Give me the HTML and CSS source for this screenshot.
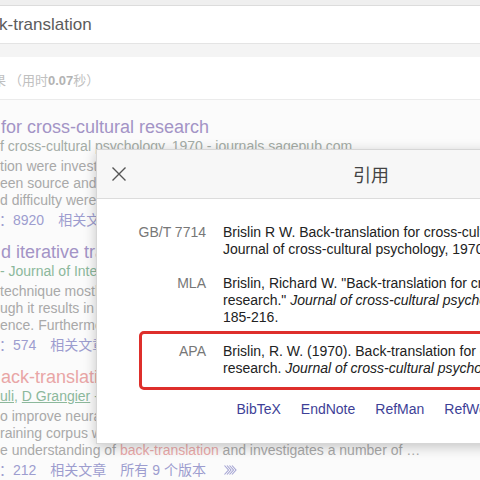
FILE: index.html
```html
<!DOCTYPE html>
<html lang="zh">
<head>
<meta charset="utf-8">
<title>引用</title>
<link rel="stylesheet" href="styles.css">
</head>
<body>
<div class="page">
  <div class="topband"></div>
  <div class="searchbar"><span class="query">k-translation</span></div>
  <div class="band"></div>
  <div class="stats"><span class="stat-text">果 （用时<b>0.07</b>秒）</span></div>
  <div class="results">
    <div class="result">
      <div class="title visited">for cross-cultural research</div>
      <div class="meta gray">f cross-cultural psychology, 1970 - journals.sagepub.com</div>
      <div class="snippet">tion were investigated in a study of translation</div>
      <div class="snippet">een source and target versions of the</div>
      <div class="snippet">d difficulty were examined in detail</div>
      <div class="links"><span class="lk">：8920</span><span class="lk">相关文章</span><span class="lk">所有 12 个版本</span></div>
    </div>
    <div class="result">
      <div class="title visited">d iterative translation for neural machine</div>
      <div class="meta">- Journal of International Research</div>
      <div class="snippet">technique mostly used for training data</div>
      <div class="snippet">ugh it results in improved quality</div>
      <div class="snippet">ence. Furthermore, we show that</div>
      <div class="links"><span class="lk">：574</span><span class="lk">相关文章</span><span class="lk">所有 8 个版本</span></div>
    </div>
    <div class="result">
      <div class="title hot">ack-translation at scale</div>
      <div class="meta"><u>uli</u>, <u>D Grangier</u> - arXiv preprint</div>
      <div class="snippet">o improve neural machine translation</div>
      <div class="snippet">raining corpus with synthetic sentences</div>
      <div class="snippet">e understanding of <span class="em">back-translation</span> and investigates a number of …</div>
      <div class="links"><span class="lk">：212</span><span class="lk">相关文章</span><span class="lk">所有 9 个版本</span><span class="lk more"><svg width="14" height="12" viewBox="0 0 14 12"><path d="M1.5 1.5 L5.5 6 L1.5 10.5 M4 1.5 L8 6 L4 10.5 M6.5 1.5 L10.5 6 L6.5 10.5 M9 1.5 L13 6 L9 10.5" fill="none" stroke="#a3a3d3" stroke-width="1.1"/></svg></span></div>
    </div>
  </div>
</div>

<div class="modal">
  <div class="modal-head">
    <span class="close"><svg width="16" height="16" viewBox="0 0 16 16"><path d="M1.5 1.5 L14.5 14.5 M14.5 1.5 L1.5 14.5" stroke="#555" stroke-width="1.4" fill="none"/></svg></span>
    <span class="modal-title">引用</span>
    <span></span>
  </div>
  <div class="modal-body">
    <div class="rows">
      <div class="row">
        <div class="label">GB/T 7714</div>
        <div class="cite">Brislin R W. Back-translation for cross-cultural research[J].<br>Journal of cross-cultural psychology, 1970, 1(3): 185-216.</div>
      </div>
      <div class="row">
        <div class="label">MLA</div>
        <div class="cite">Brislin, Richard W. "Back-translation for cross-cultural<br>research." <i>Journal of cross-cultural psychology</i> 1.3 (1970):<br>185-216.</div>
      </div>
      <div class="row hl">
        <div class="label">APA</div>
        <div class="cite">Brislin, R. W. (1970). Back-translation for cross-cultural<br>research. <i>Journal of cross-cultural psychology</i>, <i>1</i>(3), 185-216.</div>
      </div>
    </div>
    <div class="exports">
      <span>BibTeX</span><span>EndNote</span><span>RefMan</span><span>RefWorks</span>
    </div>
  </div>
</div>
</body>
</html>
```
FILE: styles.css
```css
html, body {
  margin: 0;
  padding: 0;
}
body {
  width: 480px;
  height: 480px;
  overflow: hidden;
  position: relative;
  background: #fbfbfb;
  font-family: "Liberation Sans", Arial, "Noto Sans CJK SC", sans-serif;
}
.page {
  width: 480px;
}
.topband {
  height: 5px;
  background: #efefef;
  border-bottom: 1px solid #dcdcdc;
}
.searchbar {
  height: 37px;
  background: #fff;
  border-bottom: 1px solid #e4e4e4;
  display: flex;
  align-items: center;
}
.query {
  font-size: 17px;
  color: #5c5c5c;
  margin-left: -1px;
}
.band {
  height: 13px;
  background: #f4f4f4;
}
.stats {
  height: 43px;
  background: #fff;
  border-bottom: 1px solid #ebebeb;
  display: flex;
  align-items: center;
  padding-top: 2px;
  box-sizing: border-box;
}
.stat-text {
  font-size: 13px;
  color: #c0c0c0;
  margin-left: -7px;
  white-space: nowrap;
  font-family: "Noto Sans CJK SC", "Liberation Sans", sans-serif;
}
.stat-text b {
  color: #b3b3b3;
  font-family: "Liberation Sans", Arial, sans-serif;
}
.results {
  padding-top: 16px;
}
.result {
  margin-bottom: 10px;
  white-space: nowrap;
}
.title {
  font-size: 18px;
  line-height: 22px;
  padding-left: 1px;
}
.visited { color: #a394c6; }
.hot { color: #e9a6a6; }
.meta {
  font-size: 14px;
  line-height: 17px;
  color: #8cb89b;
  margin-bottom: 3px;
}
.meta.gray { color: #a4aca6; }
.meta u { text-decoration-color: #8cb89b; }
.snippet {
  font-size: 14px;
  line-height: 17px;
  color: #a9a9a9;
}
.em { color: #eaa9a9; }
.links {
  font-size: 14px;
  line-height: 22px;
  color: #9d9dcf;
  display: flex;
  align-items: center;
  font-family: "Liberation Sans", Arial, "Noto Sans CJK SC", sans-serif;
}
.lk {
  margin-right: 14px;
}
.lk:first-child {
  margin-left: -1px;
}
.more {
  display: flex;
  align-items: center;
  margin-left: 3px;
}

/* modal */
.modal {
  position: absolute;
  left: 96px;
  top: 149px;
  width: 548px;
  background: #fff;
  border: 1px solid #d6d6d6;
  box-shadow: 0 3px 12px rgba(0, 0, 0, 0.22);
}
.modal-head {
  height: 48px;
  background: #f7f7f7;
  border-bottom: 1px solid #dcdcdc;
  display: grid;
  grid-template-columns: 1fr auto 1fr;
  align-items: center;
}
.close {
  display: flex;
  align-items: center;
  padding-left: 14px;
}
.modal-title {
  font-family: "Noto Sans CJK SC", sans-serif;
  font-size: 18px;
  color: #444;
}
.modal-body {
  padding: 25px 0 25px;
}
.rows {
  display: flex;
  flex-direction: column;
  gap: 17px;
}
.row {
  display: grid;
  grid-template-columns: 64px auto;
  column-gap: 17px;
  margin-left: 45px;
  font-size: 14px;
  line-height: 17px;
}
.label {
  display: flex;
  justify-content: flex-end;
  white-space: nowrap;
  color: #777;
}
.cite {
  color: #222;
  white-space: nowrap;
}
.row.hl {
  position: relative;
}
.row.hl::after {
  content: "";
  position: absolute;
  left: -3px;
  top: -12.5px;
  bottom: -12.5px;
  right: -40px;
  border: 3px solid #de2f2b;
  border-radius: 5px;
}
.exports {
  margin-top: 24px;
  display: flex;
  justify-content: center;
  gap: 20px;
  font-size: 14px;
  line-height: 17px;
  color: #3e3f97;
}
```
